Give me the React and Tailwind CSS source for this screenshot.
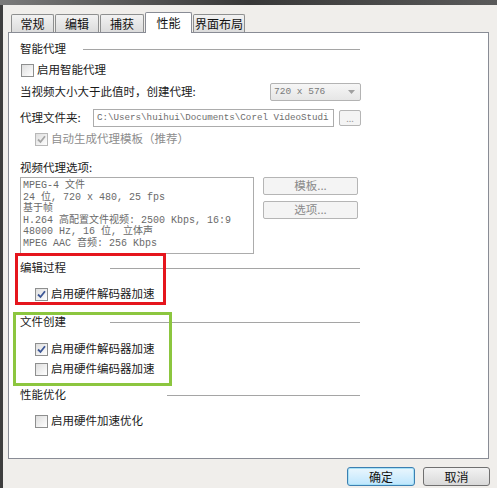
import React from "react";

const ui = { fontFamily: '"Noto Sans CJK SC", "Liberation Sans", sans-serif' };
const mono = { fontFamily: '"Liberation Mono", "Noto Sans CJK SC", monospace' };

function CheckBox({ checked, disabled }) {
  return (
    <div
      className={`w-[13px] h-[13px] border flex items-center justify-center bg-linear-to-br from-[#dedede] to-[#ffffff] ${
        disabled ? "border-[#b8b8b8]" : "border-[#8e8f8f]"
      }`}
    >
      {checked && (
        <svg width="9" height="9" viewBox="0 0 9 9">
          <path
            d="M1 4.5 L3.5 7 L8 1.2"
            fill="none"
            stroke={disabled ? "#a5a5a5" : "#3d5796"}
            strokeWidth="1.8"
          />
        </svg>
      )}
    </div>
  );
}

function CheckRow({ label, checked, disabled, className = "" }) {
  return (
    <div className={`h-[18px] flex items-center pl-[15px] gap-[3px] ${className}`}>
      <CheckBox checked={checked} disabled={disabled} />
      <span className={disabled ? "text-[#8d8d8d]" : "text-[#1a1a1a]"}>{label}</span>
    </div>
  );
}

function Header({ label, lineAt, className = "" }) {
  return (
    <div className={`h-[18px] flex items-center ${className}`}>
      <span className="shrink-0 text-[#1a1a1a]" style={{ width: lineAt }}>
        {label}
      </span>
      <div className="h-px bg-[#a5a5a5]" style={{ width: 340 - lineAt }} />
    </div>
  );
}

const tabs = [
  { label: "常规", w: "w-[43px]" },
  { label: "编辑", w: "w-[44px]" },
  { label: "捕获", w: "w-[44px]" },
  { label: "性能", w: "w-[47px]", active: true },
  { label: "界面布局", w: "w-[52px]" },
];

const proxyLines = [
  "MPEG-4 文件",
  "24 位, 720 x 480, 25 fps",
  "基于帧",
  "H.264 高配置文件视频: 2500 Kbps, 16:9",
  "48000 Hz, 16 位, 立体声",
  "MPEG AAC 音频: 256 Kbps",
];

export default function App() {
  return (
    <div
      className="relative w-[497px] h-[488px] overflow-hidden bg-[#f0eeeb] flex flex-col text-[11.5px] leading-none"
      style={ui}
    >
      <div className="h-[5px] bg-linear-to-r from-[#7a7a7a] via-[#383838] to-[#5a5a5a]" />
      <div className="flex-1 flex">
        <div className="w-[3px] bg-[#3e3e3e]" />
        <div className="flex-1 flex flex-col pl-[5px] pr-[8px]">
          {/* tabs */}
          <div className="mt-[7px] h-[20px] flex items-end gap-px pl-[3px]">
            {tabs.map((t) =>
              t.active ? (
                <div
                  key={t.label}
                  className={`${t.w} h-[21px] -mb-px relative z-10 bg-white border border-b-0 border-[#898c95] rounded-t-[2px] flex items-center justify-center text-[12px] text-[#111]`}
                >
                  {t.label}
                </div>
              ) : (
                <div
                  key={t.label}
                  className={`${t.w} h-[18px] bg-linear-to-b from-[#f2f2f2] to-[#dcdcdc] border border-b-0 border-[#8e8f8f] rounded-t-[2px] flex items-center justify-center text-[12px] text-[#111]`}
                >
                  {t.label}
                </div>
              )
            )}
          </div>

          {/* panel */}
          <div className="h-[427px] bg-white border border-[#898c95] flex flex-col pl-[11px]">
            <Header label="智能代理" lineAt={63} className="mt-[7px]" />
            <CheckRow label="启用智能代理" className="mt-[3px] !pl-[1px]" />
            <div className="mt-[4px] h-[18px] w-[341px] flex items-center justify-between">
              <span className="text-[#1a1a1a]">当视频大小大于此值时，创建代理:</span>
              <div className="w-[91px] h-[18px] rounded-[2px] border border-[#b3b3b3] bg-linear-to-b from-[#f6f6f6] to-[#e6e6e6] flex items-center justify-between pl-[3px] pr-[5px]">
                <span className="text-[9.5px] text-[#7a7a7a]" style={mono}>
                  720 x 576
                </span>
                <svg width="7" height="4" viewBox="0 0 7 4">
                  <path d="M0 0 H7 L3.5 4 Z" fill="#a0a0a0" />
                </svg>
              </div>
            </div>
            <div className="mt-[8px] h-[18px] flex items-center">
              <span className="w-[73px] shrink-0 text-[#1a1a1a]">代理文件夹:</span>
              <div className="w-[241px] h-[18px] border border-[#acacac] bg-white flex items-center pl-[3px] overflow-hidden whitespace-nowrap">
                <span className="text-[9.2px] text-[#6e6e6e]" style={mono}>
                  C:\Users\huihui\Documents\Corel VideoStudi
                </span>
              </div>
              <div className="ml-[5px] w-[22px] h-[16px] rounded-[2px] border border-[#b5b5b5] bg-[#f4f4f4] flex items-center justify-center text-[9px] text-[#9a9a9a]">
                ...
              </div>
            </div>
            <CheckRow label="自动生成代理模板（推荐）" checked disabled className="mt-[3px]" />
            <div className="mt-[12px] h-[16px] flex items-center text-[#1a1a1a]">视频代理选项:</div>
            <div className="mt-px flex gap-[9px]">
              <div
                className="w-[234px] h-[77px] border border-[#acacac] pl-[2px] pt-[2px] text-[10px] leading-[11.6px] text-[#6a6a6a] whitespace-nowrap overflow-hidden"
                style={mono}
              >
                {proxyLines.map((l) => (
                  <div key={l}>{l}</div>
                ))}
              </div>
              <div className="flex flex-col gap-[6px]">
                {["模板...", "选项..."].map((b) => (
                  <div
                    key={b}
                    className="w-[95px] h-[18px] rounded-[2px] border border-[#b5b5b5] bg-[#f4f4f4] flex items-center justify-center text-[#8a8a8a]"
                  >
                    {b}
                  </div>
                ))}
              </div>
            </div>
            <Header label="编辑过程" lineAt={90} className="mt-[5px]" />
            <CheckRow label="启用硬件解码器加速" checked className="mt-[8px]" />
            <Header label="文件创建" lineAt={90} className="mt-[10px]" />
            <CheckRow label="启用硬件解码器加速" checked className="mt-[9px]" />
            <CheckRow label="启用硬件编码器加速" className="mt-[2px]" />
            <Header label="性能优化" lineAt={147} className="mt-[8px]" />
            <CheckRow label="启用硬件加速优化" className="mt-[8px]" />
          </div>

          {/* dialog buttons */}
          <div className="mt-[8px] flex justify-end gap-[8px] -mr-px">
            <div className="w-[68px] h-[19px] rounded-[3px] border border-[#3c7fb1] bg-linear-to-b from-[#eaf6fd] to-[#bee6fd] shadow-[inset_0_0_0_1px_#a7e1f7] flex items-center justify-center text-[12px] text-[#111]">
              确定
            </div>
            <div className="w-[67px] h-[19px] rounded-[3px] border border-[#707070] bg-linear-to-b from-[#f2f2f2] to-[#d9d9d9] flex items-center justify-center text-[12px] text-[#111]">
              取消
            </div>
          </div>
        </div>
      </div>

      {/* annotation boxes */}
      <div className="absolute left-[15px] top-[253px] w-[151px] h-[52px] border-[3px] border-[#e5151d]" />
      <div className="absolute left-[13px] top-[312px] w-[159px] h-[74px] border-[3px] border-[#8cc63f]" />
    </div>
  );
}
